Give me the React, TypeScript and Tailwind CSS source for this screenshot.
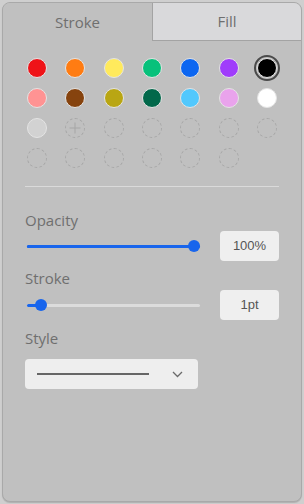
import { useState } from 'react'

const swatches = [
    '#ef1318', '#ff7c12', '#ffea5c', '#07c17b', '#0c66f1', '#a03dfb', '#000000',
    '#ff9393', '#86430e', '#b9a613', '#01684a', '#52c8fd', '#e9a3ec', '#ffffff',
]

function Slider({ pos, fill }: { pos: number; fill: boolean }) {
    // pos = thumb left offset in px within the 173px track
    return (
        <div className="relative w-[173px] h-3 ml-[2px]">
            <div className={`absolute left-0 right-0 top-[5px] h-[3px] rounded-full ${fill ? 'bg-[#1865ec]' : 'bg-[#dcdcdc]'}`} />
            <div className="absolute left-0 top-[5px] h-[3px] rounded-full bg-[#1865ec]" style={{ width: pos + 6 }} />
            <div className="absolute top-0 w-3 h-3 rounded-full bg-[#1865ec]" style={{ left: pos }} />
        </div>
    )
}

function ValueBox({ value }: { value: string }) {
    return (
        <div className="ml-auto w-[59px] h-[30px] rounded-sm bg-[#efefef] flex items-center justify-center text-[13px] text-[#555] font-['Liberation_Sans',Arial,sans-serif]">
            {value}
        </div>
    )
}

export default function App() {
    const [tab, setTab] = useState<'stroke' | 'fill'>('stroke')

    return (
        <div className="w-[304px] h-[504px] bg-[#cfcfcf] p-[2px] font-['Open_Sans',sans-serif]">
            <div className="h-full rounded-lg border border-[#a9a9a9] bg-[#c0c0c0] overflow-hidden shadow-[0_1px_1px_rgba(0,0,0,0.15)]">
                {/* Tabs */}
                <div className="grid grid-cols-2 h-[38px] text-[15px] text-[#6f6f6f]">
                    <button
                        onClick={() => setTab('stroke')}
                        className={`flex items-center justify-center ${tab === 'stroke' ? 'bg-[#c0c0c0]' : 'bg-[#d9d9db] border-r border-b border-[#a3a3a3]'}`}
                    >
                        Stroke
                    </button>
                    <button
                        onClick={() => setTab('fill')}
                        className={`flex items-center justify-center ${tab === 'fill' ? 'bg-[#c0c0c0]' : 'bg-[#d9d9db] border-l border-b border-[#a3a3a3]'}`}
                    >
                        Fill
                    </button>
                </div>

                <div className="px-[22px] pt-[17px]">
                    {/* Swatches */}
                    <div className="px-[2px] grid grid-cols-[repeat(7,20px)] justify-between gap-y-[10px]">
                        {swatches.map((c) => (
                            <div
                                key={c}
                                className={`w-5 h-5 rounded-full border border-[#e4e4e4] ${c === '#000000' ? 'outline-2 outline-offset-1 outline-[#4a4a4a]' : ''}`}
                                style={{ backgroundColor: c }}
                            />
                        ))}
                        <div className="w-5 h-5 rounded-full bg-[#d2d2d2] border border-[#e4e4e4]" />
                        <div className="w-5 h-5 rounded-full border border-dashed border-[#a6a6a6] flex items-center justify-center">
                            <svg width="12" height="12" viewBox="0 0 12 12" stroke="#a6a6a6" strokeWidth="1">
                                <path d="M6 0.5v11M0.5 6h11" />
                            </svg>
                        </div>
                        {Array.from({ length: 11 }).map((_, i) => (
                            <div key={i} className="w-5 h-5 rounded-full border border-dashed border-[#a6a6a6]" />
                        ))}
                    </div>

                    <div className="mt-[18px] h-px bg-[#dadada]" />

                    <div className="mt-[23px] text-[15px] leading-5 text-[#6f6f6f]">Opacity</div>
                    <div className="mt-px flex items-center h-[30px]">
                        <Slider pos={161} fill />
                        <ValueBox value="100%" />
                    </div>

                    <div className="mt-[7px] text-[15px] leading-5 text-[#6f6f6f]">Stroke</div>
                    <div className="mt-[2px] flex items-center h-[30px]">
                        <Slider pos={8} fill={false} />
                        <ValueBox value="1pt" />
                    </div>

                    <div className="mt-[8px] text-[15px] leading-5 text-[#6f6f6f]">Style</div>
                    <div className="mt-[11px] w-[173px] h-[30px] rounded-sm bg-[#eeeeee] flex items-center pl-3 pr-[15px]">
                        <div className="w-[112px] h-[2px] bg-[#666]" />
                        <svg className="ml-auto" width="11" height="7" viewBox="0 0 11 7" fill="none" stroke="#6a6a6a" strokeWidth="1.3">
                            <path d="M1 1l4.5 4.5L10 1" />
                        </svg>
                    </div>
                </div>
            </div>
        </div>
    )
}
